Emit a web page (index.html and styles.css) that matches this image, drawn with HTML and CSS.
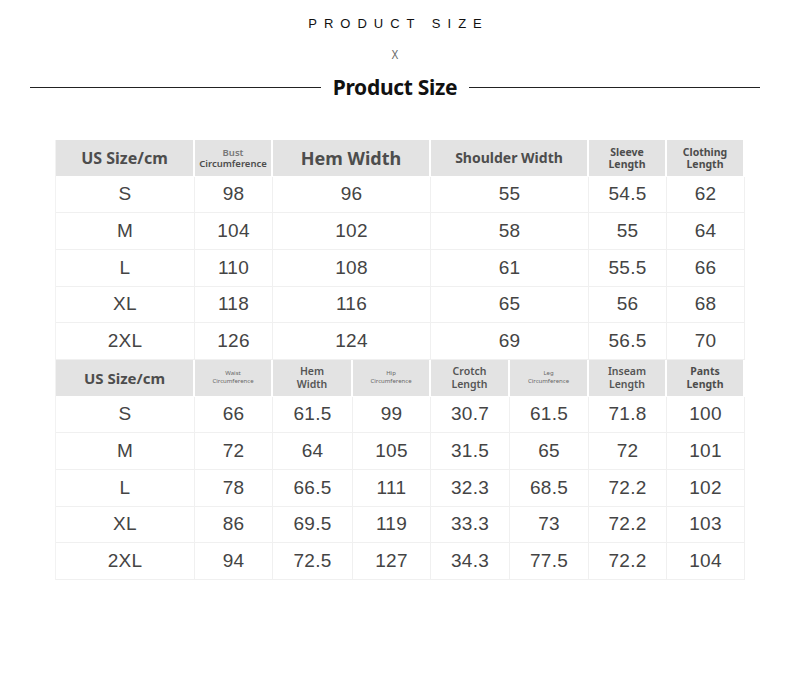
FILE: index.html
```html
<!DOCTYPE html>
<html>
<head>
<meta charset="utf-8">
<link rel="stylesheet" href="styles.css">
</head>
<body>
<div class="page">
  <div class="kicker">PRODUCT SIZE</div>
  <div class="cross">X</div>
  <div class="title-row">
    <span class="rule"></span>
    <h1 class="title">Product Size</h1>
    <span class="rule"></span>
  </div>

  <div class="chart">
    <div class="h h-us big"><span>US Size/cm</span></div>
    <div class="h h-sm"><span><span class="light">Bust</span><br>Circumference</span></div>
    <div class="h h-xl span2"><span>Hem Width</span></div>
    <div class="h h-md span2"><span>Shoulder Width</span></div>
    <div class="h h-s"><span>Sleeve<br>Length</span></div>
    <div class="h h-s"><span>Clothing<br>Length</span></div>

    <div class="c">S</div><div class="c">98</div><div class="c span2">96</div><div class="c span2">55</div><div class="c">54.5</div><div class="c">62</div>
    <div class="c">M</div><div class="c">104</div><div class="c span2">102</div><div class="c span2">58</div><div class="c">55</div><div class="c">64</div>
    <div class="c">L</div><div class="c">110</div><div class="c span2">108</div><div class="c span2">61</div><div class="c">55.5</div><div class="c">66</div>
    <div class="c">XL</div><div class="c">118</div><div class="c span2">116</div><div class="c span2">65</div><div class="c">56</div><div class="c">68</div>
    <div class="c">2XL</div><div class="c">126</div><div class="c span2">124</div><div class="c span2">69</div><div class="c">56.5</div><div class="c">70</div>

    <div class="h h-us"><span>US Size/cm</span></div>
    <div class="h h-xs"><span>Waist<br>Circumference</span></div>
    <div class="h h-s2"><span>Hem<br>Width</span></div>
    <div class="h h-xs"><span>Hip<br>Circumference</span></div>
    <div class="h h-s2"><span>Crotch<br>Length</span></div>
    <div class="h h-xs"><span>Leg<br>Circumference</span></div>
    <div class="h h-s2"><span>Inseam<br>Length</span></div>
    <div class="h h-s2 bold"><span>Pants<br>Length</span></div>

    <div class="c">S</div><div class="c">66</div><div class="c">61.5</div><div class="c">99</div><div class="c">30.7</div><div class="c">61.5</div><div class="c">71.8</div><div class="c">100</div>
    <div class="c">M</div><div class="c">72</div><div class="c">64</div><div class="c">105</div><div class="c">31.5</div><div class="c">65</div><div class="c">72</div><div class="c">101</div>
    <div class="c">L</div><div class="c">78</div><div class="c">66.5</div><div class="c">111</div><div class="c">32.3</div><div class="c">68.5</div><div class="c">72.2</div><div class="c">102</div>
    <div class="c">XL</div><div class="c">86</div><div class="c">69.5</div><div class="c">119</div><div class="c">33.3</div><div class="c">73</div><div class="c">72.2</div><div class="c">103</div>
    <div class="c">2XL</div><div class="c">94</div><div class="c">72.5</div><div class="c">127</div><div class="c">34.3</div><div class="c">77.5</div><div class="c">72.2</div><div class="c">104</div>
  </div>
</div>
</body>
</html>
```

FILE: styles.css
```css
html, body {
  margin: 0;
  padding: 0;
  background: #fff;
}
.page {
  width: 790px;
  height: 682px;
  padding-top: 16px;
  box-sizing: border-box;
  font-family: "Liberation Sans", Arial, sans-serif;
}
.kicker {
  text-align: center;
  font-size: 13px;
  line-height: 16px;
  letter-spacing: 7px;
  color: #111;
  padding-left: 7px;
}
.cross {
  margin-top: 15px;
  text-align: center;
  font-size: 12px;
  line-height: 16px;
  color: #666;
  font-weight: 300;
  transform: scaleX(0.85);
}
.title-row {
  margin-top: 10px;
  display: flex;
  align-items: center;
  padding: 0 30px;
  gap: 12px;
}
.rule {
  flex: 1;
  height: 1px;
  background: #222;
}
.title {
  margin: 0;
  font-family: "Noto Sans", "Open Sans", sans-serif;
  font-weight: 700;
  font-size: 21px;
  line-height: 28px;
  color: #111;
  letter-spacing: -0.3px;
}
.chart {
  margin: 39px 0 0 55px;
  width: 689px;
  display: grid;
  grid-template-columns: 139px 78px 80px 78px 79px 79px 78px 78px;
  grid-auto-rows: 36.67px;
  border-left: 1px solid #f2f2f2;
  box-sizing: border-box;
}
.span2 {
  grid-column: span 2;
}
.h {
  background: #e3e3e3;
  border-right: 2px solid #fff;
  border-bottom: 1px solid #fff;
  display: flex;
  align-items: center;
  justify-content: center;
  text-align: center;
  font-family: "Noto Sans", "Open Sans", sans-serif;
  font-weight: 700;
  color: #4d4d4d;
}
.h > span { display: block; }
.h-us { font-size: 15px; }
.h-us.big { font-size: 16px; }
.h-xl { font-size: 18px; }
.h-md { font-size: 14px; }
.h-s { font-size: 10.5px; line-height: 12px; }
.h-s2 { font-size: 10.5px; line-height: 12.5px; font-weight: 600; color: #555; }
.h-s2.bold { font-weight: 700; color: #4d4d4d; }
.h-sm { font-size: 9.5px; line-height: 11px; font-weight: 600; }
.h-sm .light { color: #777; }
.h-xs { font-size: 6px; line-height: 7.5px; font-weight: 400; color: #666; }
.c {
  border-right: 1px solid #f0f0f0;
  border-bottom: 1px solid #f0f0f0;
  display: flex;
  align-items: center;
  justify-content: center;
  font-size: 19px;
  color: #444;
  letter-spacing: 0.3px;
}
```
